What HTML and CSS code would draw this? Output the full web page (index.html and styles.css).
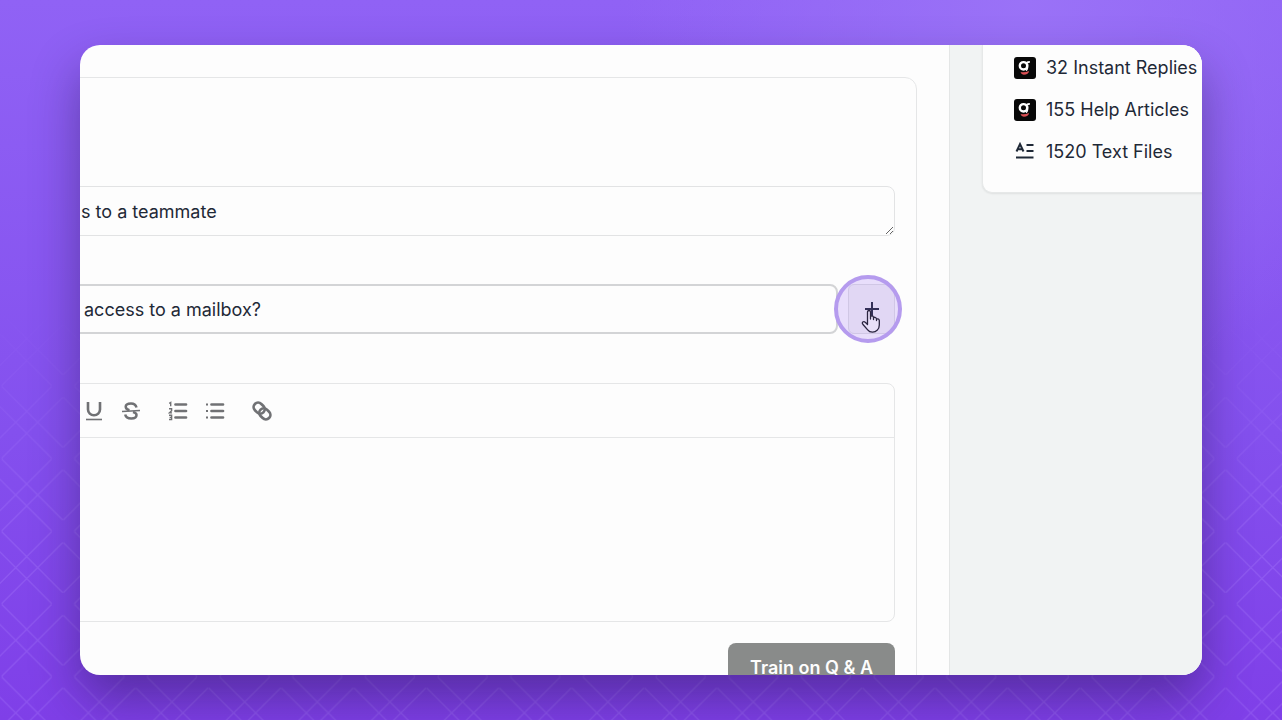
FILE: index.html
```html
<!DOCTYPE html>
<html lang="en">
<head>
  <meta charset="UTF-8" />
  <title>Train on Q &amp; A</title>
  <link rel="stylesheet" href="styles.css">
</head>
<body>
  <svg class="lattice" aria-hidden="true">
    <defs>
      <g id="strands" fill="none" stroke="#b48cff" stroke-width="4">
        <path d="M5 79L188 262M155 79L-28 262M5 295L188 112M155 295L-28 112" />
      </g>
      <pattern id="diamonds" width="218" height="218" patternUnits="userSpaceOnUse" patternTransform="translate(0 360) scale(0.3333)">
        <use href="#strands" />
        <use href="#strands" x="218" />
        <use href="#strands" y="-218" />
        <use href="#strands" x="218" y="-218" />
      </pattern>
    </defs>
    <rect width="100%" height="100%" fill="url(#diamonds)" />
  </svg>

  <div class="window">
    <main class="content">
      <form class="panel">
        <textarea class="field question" aria-label="Question" rows="1">s to a teammate</textarea>

        <div class="alt-row">
          <input class="field alternate" type="text" aria-label="Alternate question" value="access to a mailbox?" />
          <div class="add-wrap">
            <button class="add-button" type="button" aria-label="Add question">
              <svg width="14" height="14" viewBox="0 0 14 14"><path d="M7 0V14M0 7H14" stroke="#111827" stroke-width="2" /></svg>
            </button>
            <span class="click-ring"></span>
            <svg class="cursor" width="20" height="25" viewBox="0 0 20 25">
              <path d="M6.5 15.5V3.2Q6.5 1.5 8 1.5T9.500 3.200V10V7.800Q9.700 6.700 11 6.800T12.500 8.300V10.500V9.200Q12.800 8 14 8.300T15.500 9.800V11.500V10.600Q15.800 9.600 17 9.900T18.300 11.500V16Q18.300 19.500 16.200 21.200Q14.500 23.200 11.500 23.200Q8.300 23.200 6.700 20.900L2 15.500Q.8 13.800 1.800 13Q3 12.200 4.500 13.500Z" fill="#e9e0f9" stroke="#2b2540" stroke-width="1.300" stroke-linejoin="round" />
            </svg>
          </div>
        </div>

        <div class="editor">
          <div class="toolbar">
            <button type="button" aria-label="Underline">
              <svg viewBox="0 0 20 20"><path d="M4 1V8.500A6 5.800 0 0 0 16 8.500V1" stroke-width="2.600" /><path d="M2 18.500H18" stroke-width="1.600" /></svg>
            </button>
            <button type="button" aria-label="Strikethrough">
              <svg viewBox="0 0 20 20"><path d="M15.500 6.500Q14.500 2.500 10 2.500Q4.700 2.500 4.700 5.800Q4.700 8.300 8.500 9.200M12 11Q15.500 12 15.500 14Q15.500 17.500 10.300 17.500Q5 17.500 4.200 13.500" stroke-width="2.500" /><path d="M1 10.500L19 9.500" stroke-width="1.600" /></svg>
            </button>
            <button type="button" class="group-start" aria-label="Numbered list">
              <svg viewBox="0 0 20 20"><path d="M7.500 3.500H18M7.500 10H18M7.500 16.500H18" stroke-width="2.700" stroke-linecap="round" /><path d="M1.200 2.300L2.700 1.500V5.200M1 7.800H3.600V9.700L1.300 11.900H4M1 14.300H3.600V18.500H1M1.600 16.400H3.600" stroke-width="1.400" /></svg>
            </button>
            <button type="button" aria-label="Bulleted list">
              <svg viewBox="0 0 20 20"><path d="M6.500 3.500H18M6.500 10H18M6.500 16.500H18" stroke-width="2.700" stroke-linecap="round" /><path d="M1 3.500H3M1 10H3M1 16.500H3" stroke-width="2.200" /></svg>
            </button>
            <button type="button" class="group-start" aria-label="Link">
              <svg viewBox="0 0 20 20"><g transform="rotate(45 10 10)" stroke-width="2.700"><rect x="0" y="5.500" width="12" height="9" rx="4.500" /><rect x="8" y="5.500" width="12" height="9" rx="4.500" /></g></svg>
            </button>
          </div>
          <div class="editor-body" contenteditable="true" role="textbox" aria-label="Answer"></div>
        </div>

        <button class="train-button" type="button">Train on Q &amp; A</button>
      </form>
    </main>

    <aside class="sidebar">
      <ul class="sources">
        <li>
          <svg width="22" height="22" viewBox="0 0 22 22"><use href="#brand" /></svg>
          32 Instant Replies
        </li>
        <li>
          <svg width="22" height="22" viewBox="0 0 22 22">
            <g id="brand">
              <rect x="0" y="0" width="22" height="22" rx="3" fill="#080808" />
              <circle cx="9.500" cy="8.800" r="3.700" fill="none" stroke="#fff" stroke-width="2.400" />
              <path d="M12.500 6.500Q13 4.800 15.800 5" fill="none" stroke="#fff" stroke-width="1.800" />
              <path d="M13.500 7V11Q13.300 13 12 13.500" fill="none" stroke="#fff" stroke-width="1.500" />
              <path d="M6.500 15Q10.500 16 15 14Q14.500 17.800 9.800 17.800Q7.300 17.800 6.500 15Z" fill="#dc5054" />
            </g>
          </svg>
          155 Help Articles
        </li>
        <li>
          <svg width="22" height="22" viewBox="0 0 22 22" fill="none" stroke="#1f2937" stroke-width="2"><path d="M2.500 10.500L6 3L9.500 10.500M3.800 8.300H8.200M12.500 4H19.500M12.500 10H19.500M2 16.500H19.500" /></svg>
          1520 Text Files
        </li>
      </ul>
    </aside>
  </div>
</body>
</html>
```

FILE: styles.css
```css
* {
  box-sizing: border-box;
}
body {
  margin: 0;
  height: 100vh;
  padding: 45px 80px;
  overflow: hidden;
  position: relative;
  font-family: Inter, "Liberation Sans", sans-serif;
  font-size: 18px;
  color: #1f2937;
  background: radial-gradient(circle at 80% 0, #9a72f7 0, transparent 32%), linear-gradient(#9062f5, #8450ee 60%, #7f3fe8);
}
.lattice {
  position: absolute;
  inset: 0;
  width: 100%;
  height: 100%;
  opacity: 0.25;
  -webkit-mask-image: linear-gradient(transparent 42%, #000 72%);
  mask-image: linear-gradient(transparent 42%, #000 72%);
}
.window {
  position: relative;
  display: flex;
  height: 100%;
  overflow: hidden;
  border-radius: 20px;
  background: #fdfdfd;
  box-shadow: 0 24px 48px rgba(30, 20, 70, 0.42);
}
.content {
  flex: 1;
  min-width: 0;
  padding: 32px 32px 0 0;
}
.panel {
  display: flex;
  flex-direction: column;
  margin-left: -24px;
  padding: 108px 21px 24px 0;
  border: 1px solid #e5e6e7;
  border-radius: 12px;
}
.field {
  display: block;
  width: 100%;
  border: 1px solid #e2e3e4;
  border-radius: 8px;
  background: #fdfdfd;
  color: #1f2937;
  font: inherit;
  line-height: 24px;
  outline: none;
}
.question {
  height: 50px;
  padding: 13px 23px 11px;
  resize: vertical;
  overflow: hidden;
}
.alt-row {
  display: flex;
  gap: 10px;
  margin-top: 48px;
}
.alternate {
  flex: 1;
  min-width: 0;
  height: 50px;
  padding: 0 25px;
  border: 2px solid #d3d4d6;
}
.add-wrap {
  position: relative;
}
.add-button {
  display: flex;
  align-items: center;
  justify-content: center;
  width: 47px;
  height: 50px;
  padding: 0;
  border: 1px solid #dddee0;
  border-radius: 6px;
  background: #f3f3f4;
}
/* click highlight and pointer sit over the add button */
.click-ring {
  position: absolute;
  top: -9px;
  left: -14px;
  width: 68px;
  height: 68px;
  border: 4px solid #b59bee;
  border-radius: 50%;
  background: rgba(167, 125, 245, 0.24);
}
.cursor {
  position: absolute;
  top: 25px;
  left: 13px;
}
.editor {
  margin-top: 49px;
  border: 1px solid #e5e6e7;
  border-radius: 8px;
}
.toolbar {
  display: flex;
  align-items: center;
  gap: 17px;
  height: 54px;
  padding-left: 26px;
  border-bottom: 1px solid #e5e6e7;
}
.toolbar button {
  width: 20px;
  height: 20px;
  padding: 0;
  border: 0;
  background: none;
}
.toolbar svg {
  display: block;
  fill: none;
  stroke: #707174;
}
.toolbar .group-start {
  margin-left: 10px;
}
.editor-body {
  height: 183px;
}
.train-button {
  align-self: flex-end;
  height: 49px;
  margin-top: 21px;
  padding: 0 22px;
  border: 0;
  border-radius: 8px;
  background: #898b8a;
  color: #fdfdfd;
  font: inherit;
  font-weight: 600;
}
.sidebar {
  width: 253px;
  padding-left: 32px;
  border-left: 1px solid #e4e6e6;
  background: #f1f3f3;
}
.sources {
  display: flex;
  flex-direction: column;
  gap: 18px;
  width: 270px;
  margin: 0;
  padding: 11px 31px 28px;
  list-style: none;
  border: 1px solid #e6e8e8;
  border-top: 0;
  border-radius: 0 0 10px 10px;
  background: #fdfdfd;
  box-shadow: 0 1px 2px rgba(0, 0, 0, 0.08);
}
.sources li {
  display: flex;
  align-items: center;
  gap: 10px;
  line-height: 24px;
  white-space: nowrap;
}
.sources svg {
  flex: none;
}
```
